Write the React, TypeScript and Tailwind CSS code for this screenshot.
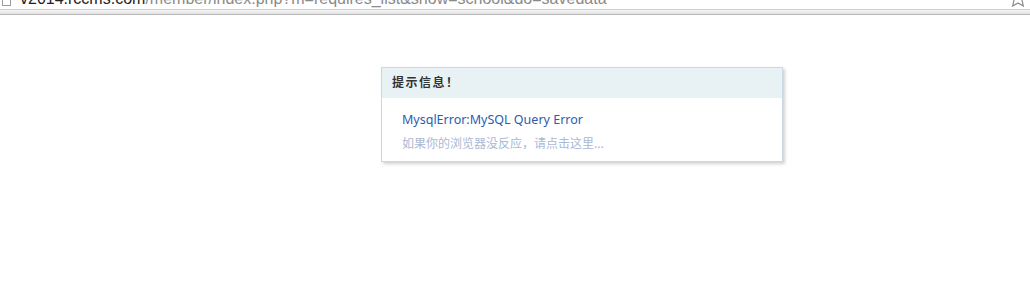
export default function App() {
  return (
    <div className="w-[1030px] h-[300px] bg-white overflow-hidden" style={{ fontFamily: '"Noto Sans", "Noto Sans CJK SC", sans-serif' }}>
      {/* browser address bar, cut off at the top */}
      <div className="relative h-[9px] overflow-hidden bg-white">
        <div className="absolute left-0 top-[-11px] flex items-center gap-[9px] whitespace-nowrap text-[16px] leading-[20px]" style={{ fontFamily: '"Liberation Sans", "DejaVu Sans", sans-serif' }}>
          <span className="ml-[2px] inline-block w-[9px] h-[14px] border border-[#9a9a9a] bg-white" />
          <span>
            <span className="text-[#222]">v2014.rccms.com</span>
            <span className="text-[#8a8a8a]">/member/index.php?m=requires_list&amp;show=school&amp;do=savedata</span>
          </span>
        </div>
        <svg className="absolute right-[2px] top-[-11px]" width="20" height="18" viewBox="0 0 20 18">
          <path d="M10 1 L12.6 6.4 L18.5 7 L14 11 L15.3 17 L10 14 L4.7 17 L6 11 L1.5 7 L7.4 6.4 Z" fill="none" stroke="#8a8a8a" strokeWidth="1.2" />
        </svg>
      </div>
      <div className="h-[1px] bg-[#cfcfcf]" />
      <div className="h-[4px] bg-gradient-to-b from-[#f6f6f6] to-[#e2e2e2]" />
      <div className="h-[1px] bg-[#b8b8b8]" />

      {/* message box */}
      <div className="ml-[381px] mt-[52px] w-[402px] border border-[#cad8e4] bg-white shadow-[2px_2px_3px_rgba(0,0,0,0.18)]">
        <div className="h-[30px] bg-[#e8f2f4] pl-[10px] flex items-center text-[12px] font-bold text-[#333] tracking-[1.5px]">
          提示信息！
        </div>
        <div className="pl-[20px] pt-[10px] pb-[5px] text-[12px] leading-[24px]">
          <div className="text-[12.5px] text-[#2c5bb0]">MysqlError:MySQL Query Error</div>
          <div className="text-[#a9b9d4]">如果你的浏览器没反应，请点击这里...</div>
        </div>
      </div>
    </div>
  );
}
